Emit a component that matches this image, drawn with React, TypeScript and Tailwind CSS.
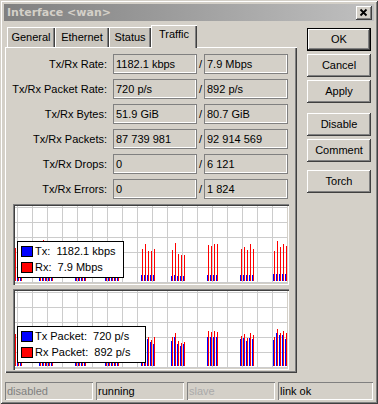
import React from "react";

type Group = { x: number; tx: number[]; rx: number[] };

const rateGroups: Group[] = [
  { x: -1, tx: [6, 6, 6], rx: [33, 37, 30] },
  { x: 24, tx: [6, 5, 6, 5, 6], rx: [30, 41, 33, 29, 35] },
  { x: 60, tx: [6, 6, 6, 6], rx: [34, 36, 33, 35] },
  { x: 90, tx: [5, 6, 5, 6, 5], rx: [31, 35, 30, 33, 36] },
  { x: 126, tx: [6, 6, 6, 6, 6], rx: [32, 37, 30, 30, 32] },
  { x: 156, tx: [5, 6, 5, 5, 5], rx: [31, 38, 27, 26, 26] },
  { x: 192, tx: [6, 6, 6, 6], rx: [36, 35, 37, 37] },
  { x: 225, tx: [6, 6, 6, 6, 6], rx: [32, 34, 31, 37, 32] },
  { x: 258, tx: [7, 7, 7, 7, 7], rx: [30, 40, 34, 37, 35] },
];

const packetGroups: Group[] = [
  { x: -1, tx: [28, 30, 27], rx: [32, 33, 30] },
  { x: 24, tx: [26, 29, 24, 27, 25], rx: [30, 33, 28, 31, 29] },
  { x: 60, tx: [27, 28, 27, 28], rx: [31, 33, 32, 32] },
  { x: 90, tx: [25, 27, 26, 24, 26], rx: [29, 31, 30, 28, 30] },
  { x: 126, tx: [25, 27, 27, 24, 22], rx: [28, 30, 29, 26, 29] },
  { x: 156, tx: [25, 29, 22, 20, 22], rx: [29, 33, 25, 23, 24] },
  { x: 192, tx: [29, 29, 29, 29], rx: [35, 34, 35, 34] },
  { x: 225, tx: [27, 28, 25, 28, 27], rx: [30, 32, 28, 33, 31] },
  { x: 258, tx: [26, 33, 31, 31, 27], rx: [29, 37, 33, 35, 33] },
];

const stats = [
  { label: "Tx/Rx Rate:", tx: "1182.1 kbps", rx: "7.9 Mbps" },
  { label: "Tx/Rx Packet Rate:", tx: "720 p/s", rx: "892 p/s" },
  { label: "Tx/Rx Bytes:", tx: "51.9 GiB", rx: "80.7 GiB" },
  { label: "Tx/Rx Packets:", tx: "87 739 981", rx: "92 914 569" },
  { label: "Tx/Rx Drops:", tx: "0", rx: "6 121" },
  { label: "Tx/Rx Errors:", tx: "0", rx: "1 824" },
];

const tabs = [
  { name: "General", w: "w-[48px]" },
  { name: "Ethernet", w: "w-[54px]" },
  { name: "Status", w: "w-[42px]" },
  { name: "Traffic", w: "w-[46px]", active: true },
];

function WinButton({ label, primary }: { label: string; primary?: boolean }) {
  return (
    <div
      className={
        primary
          ? "h-[23px] w-[64px] border border-black flex items-center justify-center shadow-[inset_-1px_-1px_#404040,inset_1px_1px_#ffffff,inset_-2px_-2px_#808080]"
          : "h-[23px] w-[64px] flex items-center justify-center shadow-[inset_-1px_-1px_#404040,inset_1px_1px_#ffffff,inset_-2px_-2px_#808080]"
      }
    >
      {label}
    </div>
  );
}

function Field({ value }: { value: string }) {
  return (
    <div className="w-[84px] h-[20px] border border-[#808080] shadow-[inset_-1px_-1px_#ffffff] pl-[2px] flex items-center whitespace-nowrap">
      {value}
    </div>
  );
}

function Graph({
  groups,
  legend,
  legendWidth,
}: {
  groups: Group[];
  legend: string[];
  legendWidth: string;
}) {
  const cols = Array.from({ length: 19 }, (_, k) => 2 + 15 * k);
  const rows = Array.from({ length: 6 }, (_, k) => 1 + 15 * k);
  return (
    <div className="relative w-[276px] h-[81px] p-[2px] bg-white shadow-[inset_1px_1px_#808080,inset_2px_2px_#404040,inset_-1px_-1px_#ffffff,inset_-2px_-2px_#d4d0c8]">
      <svg width="272" height="77" viewBox="0 0 272 77" shapeRendering="crispEdges" className="block">
        {cols.map((x) => (
          <rect key={"c" + x} x={x} y={0} width={1} height={77} fill="#cccccc" />
        ))}
        {rows.map((y) => (
          <rect key={"r" + y} x={0} y={y} width={272} height={1} fill="#cccccc" />
        ))}
        {groups.map((g) =>
          g.tx.map((h, i) => (
            <g key={g.x + "-" + i}>
              <rect x={g.x + i * 3} y={75 - h} width={1} height={h} fill="#0000ff" />
              <rect x={g.x + i * 3 + 1} y={75 - g.rx[i]} width={1} height={g.rx[i]} fill="#ff0000" />
            </g>
          ))
        )}
      </svg>
      <div
        className={
          "absolute left-[4px] top-[37px] h-[37px] border border-black bg-white pl-[3px] pt-[4px] flex flex-col gap-[5px] " +
          legendWidth
        }
      >
        <div className="flex items-center h-[11px]">
          <div className="w-[12px] h-[11px] border border-black bg-[#0000ff]" />
          <span className="ml-[2px] whitespace-pre">{legend[0]}</span>
        </div>
        <div className="flex items-center h-[11px]">
          <div className="w-[12px] h-[11px] border border-black bg-[#ff0000]" />
          <span className="ml-[2px] whitespace-pre">{legend[1]}</span>
        </div>
      </div>
    </div>
  );
}

export default function App() {
  return (
    <div className="w-[378px] h-[404px] bg-[#d4d0c8] p-[4px] flex flex-col overflow-hidden text-[11px] leading-none text-black [font-family:Liberation_Sans,Arial,sans-serif] shadow-[inset_1px_1px_#d4d0c8,inset_-1px_-1px_#404040,inset_2px_2px_#ffffff,inset_-2px_-2px_#808080]">
      {/* title bar, inactive */}
      <div className="h-[17px] flex items-center justify-between pl-[3px] pr-[2px] bg-linear-to-r from-[#808080] to-[#c0c0c0]">
        <span className="text-[11px] font-bold text-[#d4d0c8] [font-family:DejaVu_Sans,Verdana,sans-serif]">
          Interface &lt;wan&gt;
        </span>
        <div className="w-[16px] h-[14px] bg-[#d4d0c8] shadow-[inset_-1px_-1px_#404040,inset_1px_1px_#ffffff,inset_-2px_-2px_#808080]">
          <svg width="16" height="14" viewBox="0 0 16 14">
            <path d="M4.5 3.5 L10.5 9.5 M10.5 3.5 L4.5 9.5" stroke="#000" strokeWidth="1.8" fill="none" />
          </svg>
        </div>
      </div>

      <div className="flex mt-[4px] px-[1px]">
        <div className="w-[292px] flex flex-col">
          <div className="h-[22px] flex items-end pl-[2px]">
            {tabs.map((t) =>
              t.active ? (
                <div
                  key={t.name}
                  className={
                    "relative z-10 h-[23px] -mb-[1px] bg-[#d4d0c8] flex items-center justify-center pb-[4px] shadow-[inset_1px_1px_#ffffff,inset_-1px_0_#404040,inset_-2px_0_#808080] " +
                    t.w
                  }
                >
                  {t.name}
                </div>
              ) : (
                <div
                  key={t.name}
                  className={
                    "h-[20px] bg-[#cac6be] flex items-center justify-center pt-[1px] shadow-[inset_1px_1px_#ffffff,inset_-1px_0_#404040,inset_-2px_0_#808080] " +
                    t.w
                  }
                >
                  {t.name}
                </div>
              )
            )}
          </div>

          <div className="h-[326px] pt-[7px] flex flex-col shadow-[inset_1px_1px_#ffffff,inset_-1px_-1px_#404040,inset_-2px_-2px_#808080]">
            <div className="flex flex-col gap-[5px]">
              {stats.map((s) => (
                <div key={s.label} className="flex items-center h-[20px]">
                  <div className="w-[102px] text-right whitespace-nowrap">{s.label}</div>
                  <div className="ml-[6px]">
                    <Field value={s.tx} />
                  </div>
                  <div className="w-[7px] text-center">/</div>
                  <Field value={s.rx} />
                </div>
              ))}
            </div>
            <div className="ml-[8px] mt-[5px] flex flex-col gap-[4px]">
              <Graph
                groups={rateGroups}
                legend={["Tx:  1182.1 kbps", "Rx:  7.9 Mbps"]}
                legendWidth="w-[107px]"
              />
              <Graph
                groups={packetGroups}
                legend={["Tx Packet:  720 p/s", "Rx Packet:  892 p/s"]}
                legendWidth="w-[129px]"
              />
            </div>
          </div>
        </div>

        <div className="ml-[10px] w-[64px] pt-[3px] flex flex-col">
          <div className="flex flex-col gap-[3px]">
            <WinButton label="OK" primary />
            <WinButton label="Cancel" />
            <WinButton label="Apply" />
          </div>
          <div className="flex flex-col gap-[3px] mt-[10px]">
            <WinButton label="Disable" />
            <WinButton label="Comment" />
          </div>
          <div className="mt-[8px]">
            <WinButton label="Torch" />
          </div>
        </div>
      </div>

      <div className="mt-[9px] h-[18px] flex gap-[3px] px-[1px]">
        <div className="w-[88px] pl-[1px] flex items-center text-[#808080] border-t border-l border-[#808080] shadow-[inset_-1px_-1px_#ffffff]">
          disabled
        </div>
        <div className="w-[88px] pl-[1px] flex items-center border-t border-l border-[#808080] shadow-[inset_-1px_-1px_#ffffff]">
          running
        </div>
        <div className="w-[88px] pl-[1px] flex items-center text-[#aaaaaa] border-t border-l border-[#808080] shadow-[inset_-1px_-1px_#ffffff]">
          slave
        </div>
        <div className="flex-1 pl-[1px] flex items-center border-t border-l border-[#808080] shadow-[inset_-1px_-1px_#ffffff]">
          link ok
        </div>
      </div>
    </div>
  );
}
